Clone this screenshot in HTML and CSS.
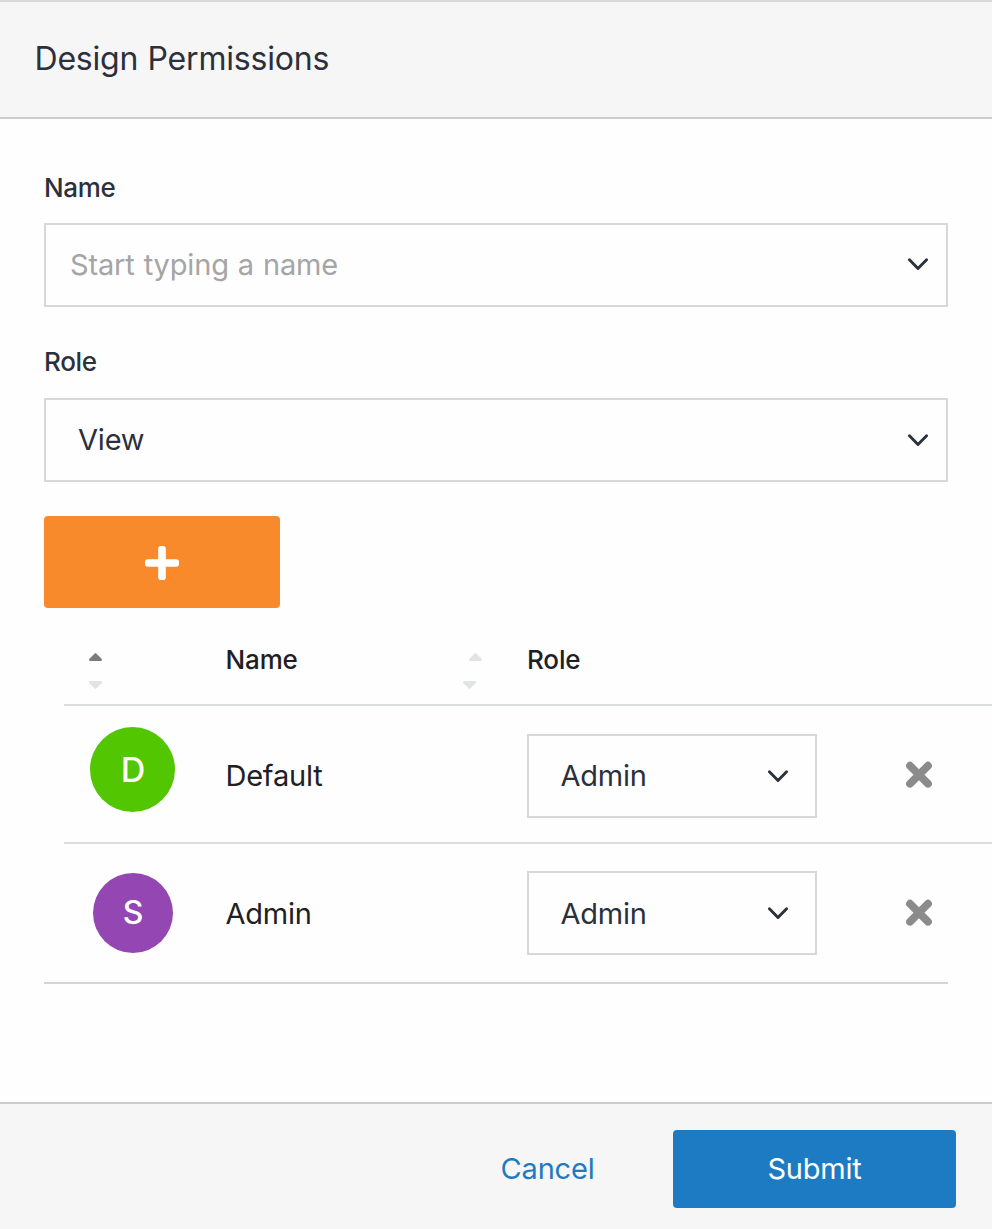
FILE: index.html
```html
<!DOCTYPE html>
<html lang="en">
<head>
<meta charset="utf-8">
<title>Design Permissions</title>
<link rel="stylesheet" href="styles.css">
</head>
<body>
<svg width="0" height="0" class="defs">
  <symbol id="chevron" viewBox="0 0 22 14"><path d="M2.400 2.700 11 11.400 19.600 2.700" fill="none" stroke="#2b303b" stroke-width="2.900" stroke-linecap="round" stroke-linejoin="round"/></symbol>
  <symbol id="cross" viewBox="0 0 28 28"><path d="M5 4.700 23 22.700M23 4.700 5 22.700" fill="none" stroke="#8b8b8b" stroke-width="7.800" stroke-linecap="round"/></symbol>
  <symbol id="up" viewBox="0 0 13 8"><path d="M5.800.4Q6.500-.2 7.200.4L12.600 5.800Q13.400 8 12 8H1Q-.4 8 .4 5.800Z" fill="currentColor"/></symbol>
  <symbol id="down" viewBox="0 0 13 8"><path d="M5.800 7.600Q6.500 8.200 7.200 7.600L12.600 2.200Q13.400 0 12 0H1Q-.4 0 .4 2.200Z" fill="currentColor"/></symbol>
</svg>
<div class="dialog">
  <header class="head"><h1 class="title">Design Permissions</h1></header>
  <main class="body">
    <label class="label">Name</label>
    <div class="select combo"><span class="placeholder">Start typing a name</span><svg class="chevron"><use href="#chevron"/></svg></div>
    <label class="label label-role">Role</label>
    <div class="select role"><span>View</span><svg class="chevron"><use href="#chevron"/></svg></div>
    <button class="add" aria-label="Add"><svg width="34" height="34" viewBox="0 0 34 34" fill="#fff"><rect x="13.200" y="0" width="7.600" height="34" rx="2.800"/><rect x="0" y="13.200" width="34" height="7.600" rx="2.800"/></svg></button>
    <div class="table">
      <div class="row thead">
        <div class="sort"><svg class="tri active"><use href="#up"/></svg><svg class="tri"><use href="#down"/></svg></div>
        <div class="th-name"><span>Name</span><div class="sort sort-name"><svg class="tri tri-shift"><use href="#up"/></svg><svg class="tri"><use href="#down"/></svg></div></div>
        <div>Role</div>
      </div>
      <div class="row first">
        <div class="avatar green">D</div>
        <div class="name">Default</div>
        <div class="select small"><span>Admin</span><svg class="chevron"><use href="#chevron"/></svg></div>
        <svg class="cross"><use href="#cross"/></svg>
      </div>
      <div class="row second">
        <div class="avatar purple">S</div>
        <div class="name">Admin</div>
        <div class="select small"><span>Admin</span><svg class="chevron"><use href="#chevron"/></svg></div>
        <svg class="cross"><use href="#cross"/></svg>
      </div>
    </div>
  </main>
  <footer class="foot"><button class="cancel">Cancel</button><button class="submit">Submit</button></footer>
</div>
</body>
</html>
```
FILE: styles.css
```css
* { box-sizing: border-box; }
body { margin: 0; background: #fefefe; color: #2b303b; font: 400 29px/40px Inter, sans-serif; letter-spacing: -.2px; overflow: hidden; }
.defs { position: absolute; }
.dialog { display: flex; flex-direction: column; height: 1229px; }
.head { height: 119px; padding: 36px 0 0 34.500px; border-top: 2px solid #d8d8d8; border-bottom: 2px solid #ccc; background: #f6f6f6; }
.title { margin: 0; font-size: 32px; font-weight: 400; line-height: 42px; letter-spacing: -.2px; word-spacing: .5px; }
.body { flex: 1; padding: 53px 0 0 44px; }
.label { display: block; height: 32px; font-size: 26px; font-weight: 500; line-height: 32px; letter-spacing: -.3px; }
.label-role { margin-top: 39px; }
.select { display: flex; align-items: center; justify-content: space-between; width: 904px; height: 84px; border: 2px solid #d7d7d7; padding: 0 17px 0 32px; }
.combo { margin-top: 19px; padding-left: 24px; }
.combo .chevron { margin-bottom: 3px; }
.role { margin-top: 20px; }
.placeholder { color: #a5a5a5; letter-spacing: -.15px; word-spacing: 1px; }
.chevron { width: 22px; height: 14px; }
.add { display: flex; align-items: center; justify-content: center; width: 236px; height: 92px; margin-top: 34px; padding: 1px 0 0; border: 0; border-radius: 4px; background: #f88a2b; }
.table { width: 948px; }
.row { display: grid; grid-template-columns: 162px 301px 378px 28px; margin-left: 20px; border-bottom: 2px solid #d9dce0; color: #1e2024; }
.thead { height: 98px; padding-top: 36px; font-size: 26px; font-weight: 500; line-height: 32px; letter-spacing: -.15px; }
.th-name { display: flex; justify-content: space-between; padding-right: 51px; }
.th-name span { margin-left: -.5px; }
.sort { display: flex; flex-direction: column; gap: 20px; padding: 9px 0 0 25px; }
.sort-name { padding-left: 0; }
.tri { display: block; width: 13px; height: 8px; color: #e2e3e4; }
.active { color: #797b7f; }
.tri-shift { margin-left: 6px; margin-right: -6px; }
.first { height: 138px; padding-top: 21px; }
.second { height: 140px; padding-top: 29px; margin-left: 0; margin-right: 44px; padding-left: 20px; border-color: #d5d5d5; }
.avatar { display: flex; align-items: center; justify-content: center; border-radius: 50%; color: #fff; font-weight: 500; letter-spacing: 0; }
.green { width: 85px; height: 85px; margin-left: 26px; padding-left: 1px; background: #51c601; font-size: 34px; }
.purple { width: 80px; height: 80px; margin-left: 29px; background: #9447b3; font-size: 32px; }
.name { padding-top: 29px; margin-left: -.6px; letter-spacing: -.2px; }
.small { width: 290px; color: #2b303b; padding: 0 26px 0 31.400px; margin-top: 7px; }
.cross { width: 28px; height: 28px; margin-top: 34px; }
.second .name { padding-top: 21px; }
.second .small { margin-top: -2px; }
.second .small span { padding-top: 2px; }
.second .cross { margin-top: 26px; }
.foot { display: flex; justify-content: flex-end; height: 127px; padding: 26px 36px 0 0; border-top: 2px solid #ccc; background: #f6f6f6; }
.cancel, .submit { height: 78px; padding: 0; border: 0; font: inherit; letter-spacing: -.2px; }
.cancel { margin-right: 78.500px; background: none; color: #1c7bc3; }
.submit { width: 283px; border-radius: 4px; background: #1c7bc3; color: #fff; }
```
